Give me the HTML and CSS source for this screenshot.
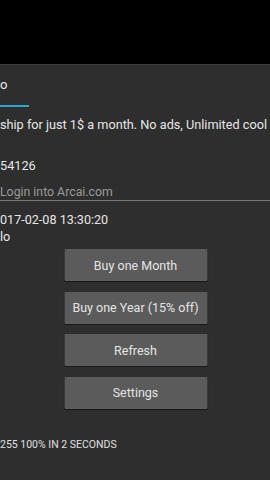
FILE: index.html
```html
<!DOCTYPE html>
<html>
<head>
<meta charset="utf-8">
<link rel="stylesheet" href="styles.css">
</head>
<body>
<div class="statusbar"></div>
<div class="screen">
  <div class="tab">o</div>
  <div class="tab-indicator"></div>
  <div class="desc">ship for just 1$ a month. No ads, Unlimited cool t</div>
  <div class="userid">54126</div>
  <div class="edit">Login into Arcai.com</div>
  <div class="date">017-02-08 13:30:20</div>
  <div class="status">lo</div>
  <div class="buttons">
    <button class="btn">Buy one Month</button>
    <button class="btn">Buy one Year (15% off)</button>
    <button class="btn">Refresh</button>
    <button class="btn">Settings</button>
  </div>
  <div class="footer">255 100% IN 2 SECONDS</div>
</div>
</body>
</html>
```
FILE: styles.css
```css
html, body {
  margin: 0;
  padding: 0;
  background: #2e2e2e;
  font-family: Roboto, "Noto Sans", sans-serif;
  color: #e6e6e6;
}
.statusbar {
  height: 64px;
  background: #000;
}
.screen {
  border-top: 1px solid #3a3a3a;
  height: 415px;
  overflow: hidden;
}
.tab {
  height: 40px;
  line-height: 40px;
  font-size: 13px;
  color: #e8e8e8;
}
.tab-indicator {
  width: 29px;
  height: 2px;
  background: #2fa8cf;
}
.desc {
  margin-top: 10px;
  line-height: 16px;
  font-size: 12.7px;
  white-space: nowrap;
}
.userid {
  margin-top: 25px;
  line-height: 16px;
  font-size: 12.7px;
}
.edit {
  margin-top: 10px;
  line-height: 16px;
  font-size: 12.3px;
  color: #9a9a9a;
  border-bottom: 1px solid #777;
}
.date {
  margin-top: 10px;
  line-height: 17px;
  font-size: 12.6px;
}
.status {
  line-height: 17px;
  font-size: 12.6px;
}
.buttons {
  margin-top: 4px;
  display: flex;
  flex-direction: column;
  align-items: center;
  gap: 10.67px;
}
.btn {
  width: 143px;
  height: 32px;
  margin: 0;
  padding: 0;
  border: none;
  border-radius: 1px;
  background: #5b5b5b;
  box-shadow: 0 1px 1px rgba(0,0,0,0.45);
  color: #e4e4e4;
  font-family: Roboto, "Noto Sans", sans-serif;
  font-size: 12.5px;
  transform: translateX(0.5px);
}
.footer {
  margin-top: 29px;
  line-height: 14px;
  font-size: 10.5px;
  color: #e0e0e0;
}
```
